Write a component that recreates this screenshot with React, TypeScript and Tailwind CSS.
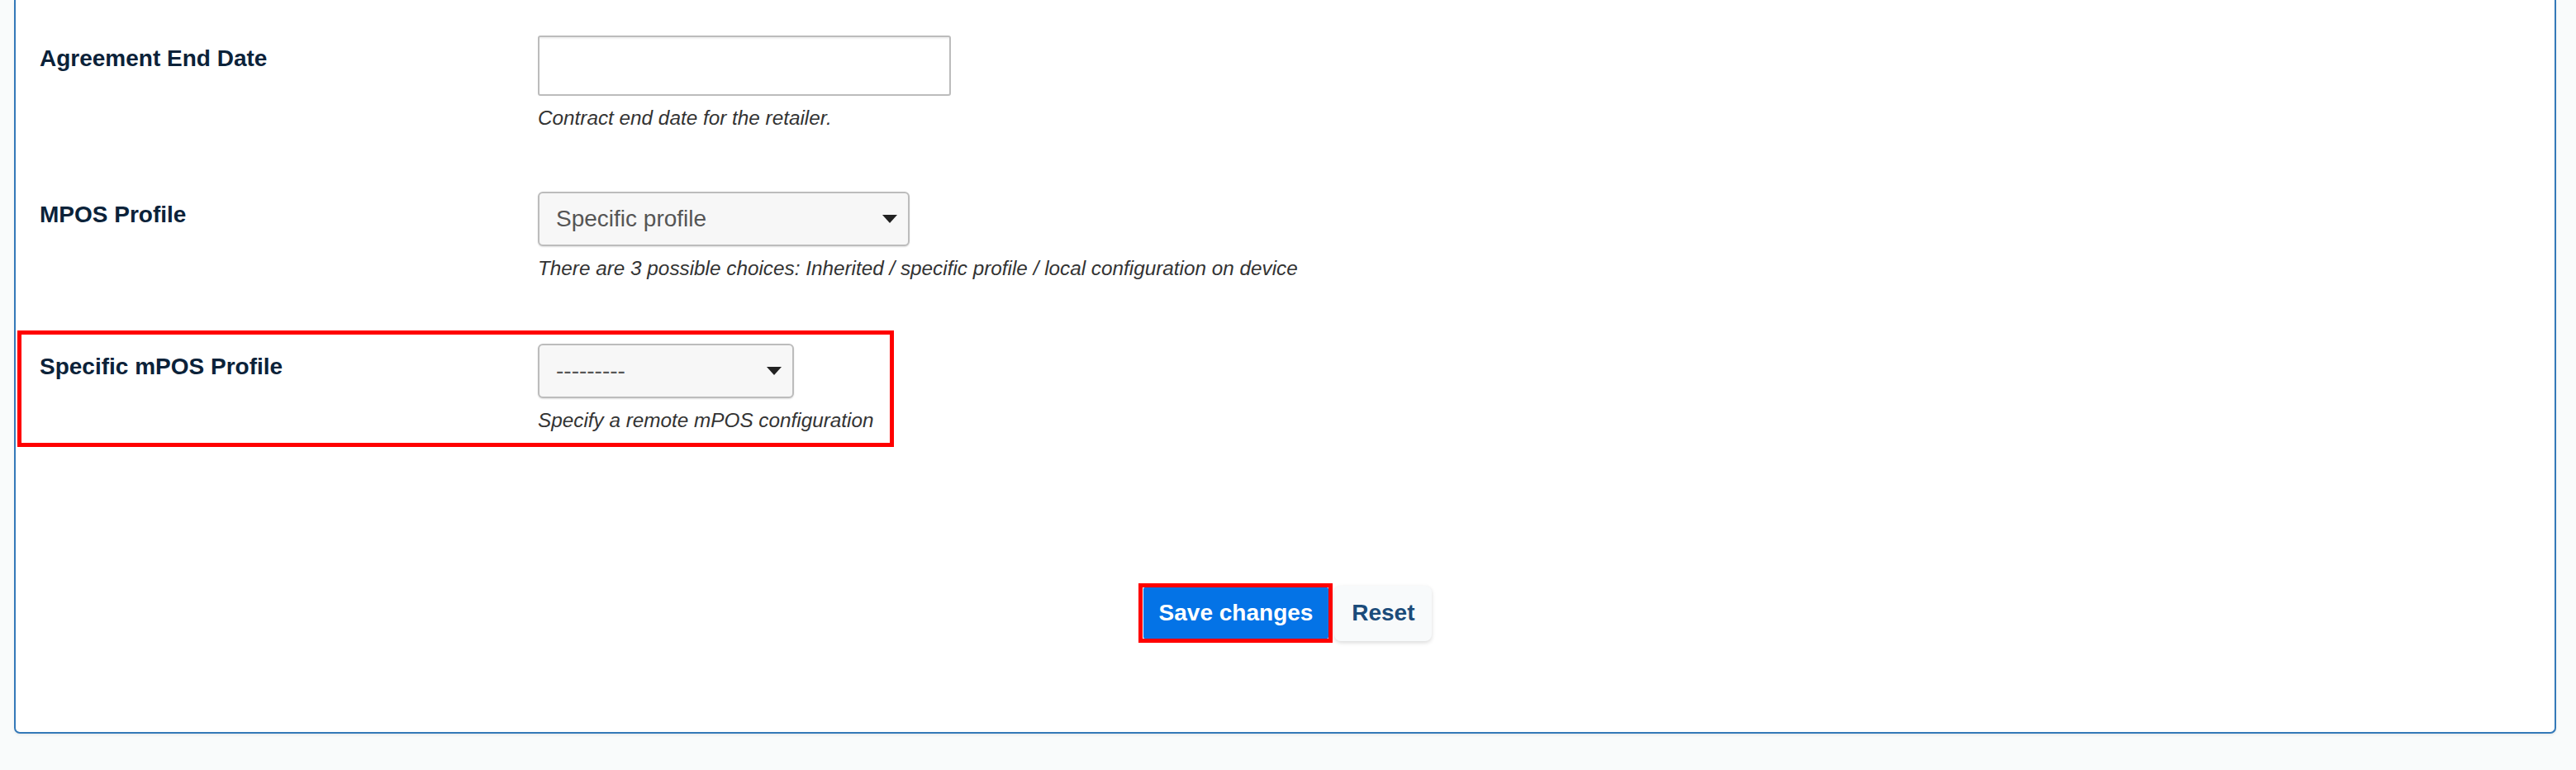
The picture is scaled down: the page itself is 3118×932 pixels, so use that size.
import React from "react";

// ── Field row: label column + control column with help text ────────────────
function Row({ label, help, children }: { label: string; help: string; children: React.ReactNode }) {
  return (
    <div className="flex">
      <label className="w-[603px] shrink-0 pt-[8px] text-[28px] leading-[40px] font-bold text-[#0b2239]">
        {label}
      </label>
      <div className="flex flex-col">
        {children}
        <p className="mt-[10px] text-[24.3px] leading-[34px] italic text-[#333]">{help}</p>
      </div>
    </div>
  );
}

function Select({ value, width }: { value: string; width: string }) {
  return (
    <div className={`relative ${width}`}>
      <select
        defaultValue={value}
        className="appearance-none w-full h-[66px] pl-[20px] pr-[50px] bg-[#f7f7f7] border-2 border-[#bcbcbc] rounded-[6px] shadow-[0_1px_2px_rgba(0,0,0,0.12)] text-[28px] text-[#555] outline-none"
      >
        <option value={value}>{value}</option>
      </select>
      <svg
        className="absolute right-[15px] top-1/2 -translate-y-1/2 pointer-events-none"
        width="18"
        height="10"
        viewBox="0 0 18 10"
      >
        <path d="M0 0 H18 L9 10 Z" fill="#222" />
      </svg>
    </div>
  );
}

export default function App() {
  return (
    <div className="min-h-[932px] bg-[#f9fbfb] font-['Liberation_Sans',Arial,sans-serif]">
      <div className="ml-[17px] mr-[24px] bg-white border-x-2 border-b-2 border-[#3479b8] rounded-b-[7px] shadow-[0_2px_3px_rgba(0,0,0,0.06)] pt-[43px]">
        <div className="pl-[29px]">
          <Row label="Agreement End Date" help="Contract end date for the retailer.">
            <input
              type="text"
              className="w-[500px] h-[73px] bg-white border-2 border-[#bcbcbc] rounded-[3px] shadow-[inset_0_2px_2px_rgba(0,0,0,0.06)] outline-none"
            />
          </Row>

          <div className="mt-[72px]">
            <Row
              label="MPOS Profile"
              help="There are 3 possible choices: Inherited / specific profile / local configuration on device"
            >
              <Select value="Specific profile" width="w-[450px]" />
            </Row>
          </div>

          <div className="mt-[58px] -ml-[27px] w-[1061px] border-[5px] border-[#ff0000] pl-[22px] pt-[11px] pb-[10px]">
            <Row label="Specific mPOS Profile" help="Specify a remote mPOS configuration">
              <Select value="---------" width="w-[310px]" />
            </Row>
          </div>
        </div>

        {/* ── Actions ── */}
        <div className="mt-[165px] pb-[108px] flex items-center justify-center gap-[2px]">
          <div className="border-[5px] border-[#ff0000]">
            <button className="h-[62px] px-[19px] ml-[1px] bg-[#0473e6] rounded-[2px] text-white text-[28px] font-bold">
              Save changes
            </button>
          </div>
          <button className="h-[67px] w-[118px] bg-[#f8fafb] rounded-[8px] shadow-[0_2px_5px_rgba(0,0,0,0.15)] text-[#1b4b7a] text-[28px] font-bold">
            Reset
          </button>
        </div>
      </div>
    </div>
  );
}
